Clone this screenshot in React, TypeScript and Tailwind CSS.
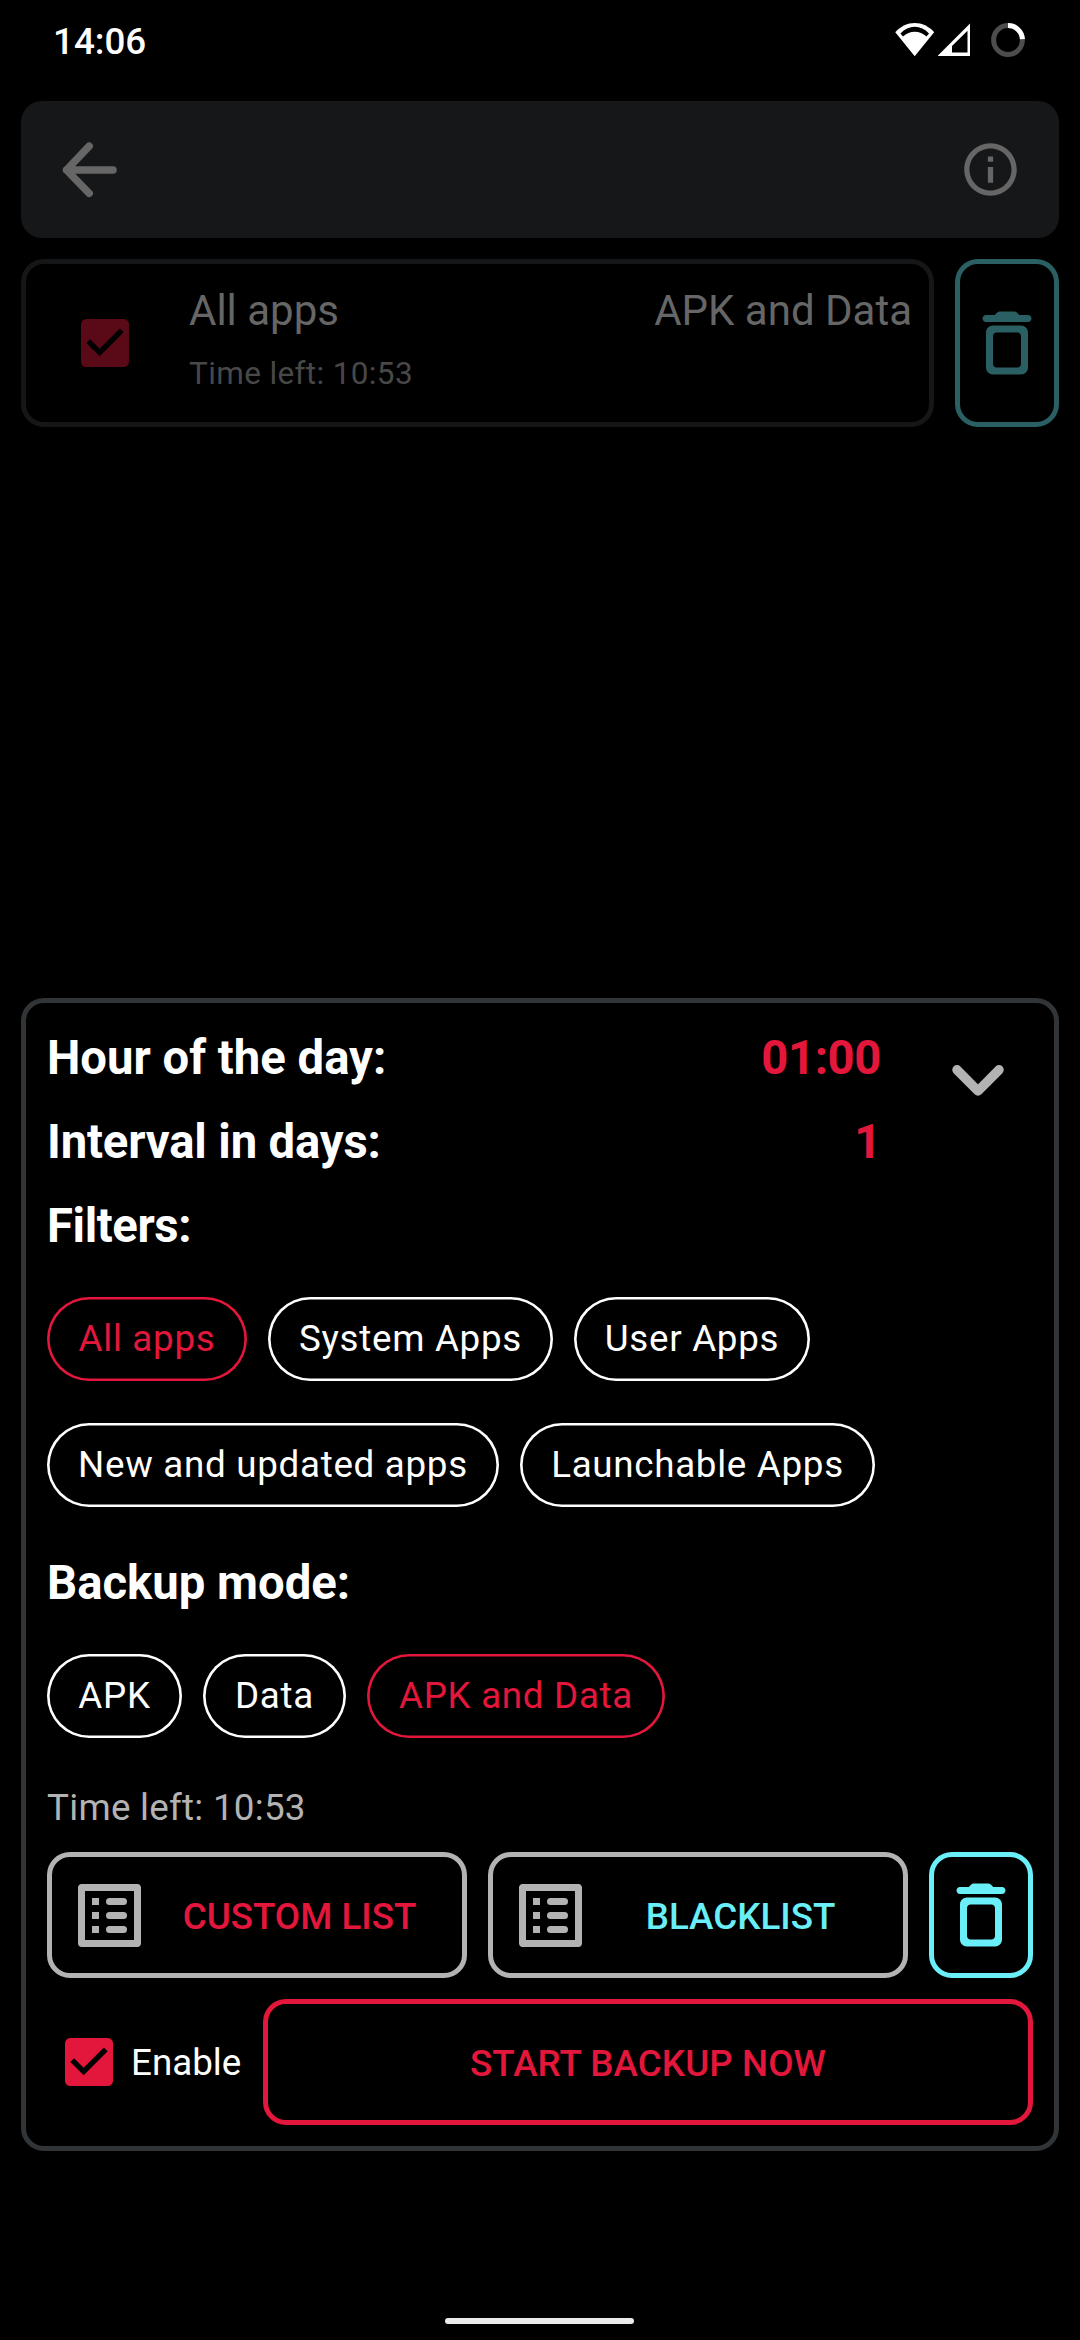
import React from "react";

const TrashIcon = () => (
  <svg viewBox="0 0 24 24" className="size-[84px] shrink-0" fill="currentColor">
    <path d="M6 4h2.5l.71-.71c.18-.18.44-.29.7-.29h4.18c.26 0 .52.11.7.29l.71.71H18c.55 0 1 .45 1 1s-.45 1-1 1H6c-.55 0-1-.45-1-1s.45-1 1-1z" />
    <path
      fillRule="evenodd"
      d="M6 9c0-1.100.9-2 2-2h8c1.100 0 2 .9 2 2v10c0 1.100-.9 2-2 2H8c-1.100 0-2-.9-2-2V9zm3 0c-.55 0-1 .45-1 1v8c0 .55.45 1 1 1h6c.55 0 1-.45 1-1v-8c0-.55-.45-1-1-1H9z"
    />
  </svg>
);

const ListIcon = () => (
  <svg viewBox="3 3 18 18" className="size-[63px] shrink-0" fill="#b3b3b3">
    <path
      fillRule="evenodd"
      d="M4 3h16c.55 0 1 .45 1 1v16c0 .55-.45 1-1 1H4c-.55 0-1-.45-1-1V4c0-.55.45-1 1-1zm1 2v14h14V5H5z"
    />
    <path d="M7 7h2v2H7zM7 11h2v2H7zM7 15h2v2H7z" />
    <rect x="11" y="7" width="6" height="2" rx="1" />
    <rect x="11" y="11" width="6" height="2" rx="1" />
    <rect x="11" y="15" width="6" height="2" rx="1" />
  </svg>
);

const CheckedBox = () => (
  <svg viewBox="3 3 18 18" className="size-[48px] shrink-0">
    <rect x="3" y="3" width="18" height="18" rx="2" fill="currentColor" />
    <path d="M10 17l-5-5 1.41-1.41L10 14.17l7.59-7.59L19 8z" fill="#000" />
  </svg>
);

const Chip = ({ label, width, active }: { label: string; width: string; active?: boolean }) => (
  <button
    className={
      "flex h-[84px] shrink-0 items-center justify-center rounded-full text-[36.75px] leading-none tracking-[0.7px] whitespace-nowrap shadow-[inset_0_0_0_2.6px_currentColor] " +
      width +
      (active ? " text-[#e2173b]" : " text-white")
    }
  >
    {label}
  </button>
);

const Heading = ({ label, value, tracking = "" }: { label: string; value?: string; tracking?: string }) => (
  <div className="flex h-[84px] items-center justify-between text-[47.25px] leading-none font-bold">
    <span className={tracking}>{label}</span>
    {value && <span className="tracking-[-0.4px] text-[#e2173b]">{value}</span>}
  </div>
);

const ListButton = ({ label, tone }: { label: string; tone: string }) => (
  <button className="flex h-[126px] w-[420px] items-center rounded-[23px] border-5 border-[#b3b3b3] pr-[4px] pl-[26px]">
    <ListIcon />
    <span className={"flex-1 pt-[4px] text-center text-[36.75px] leading-none font-medium " + tone}>{label}</span>
  </button>
);

export default function App() {
  return (
    <div className="flex h-[2340px] w-[1080px] flex-col overflow-hidden bg-black font-[Roboto,sans-serif] text-white">
      <header className="flex h-[101px] shrink-0 items-start justify-between pr-[55px] pl-[53px]">
        <span className="mt-[23px] text-[36.75px] leading-[37px] font-medium">14:06</span>
        <div className="mt-[22px] flex items-center">
          <svg viewBox="0 0 40 36" className="h-[36px] w-[40px]">
            <path d="M19.700 34.300.3 10.300C11-2.100 28.500-2.100 39.200 10.300z" fill="#fff" />
            <path d="M5.500 11.500C13.500 2.400 26 2.400 34 11.500L31.500 14.600C25 8 14.500 8 8 14.600z" fill="#000" />
          </svg>
          <svg viewBox="0 0 34 36" className="ml-[3px] h-[36px] w-[34px]">
            <path d="M-.5 34 32 1.500V34z" fill="#fff" />
            <path d="M14 24 29.500 8.700V30.500H14z" fill="#000" />
          </svg>
          <svg viewBox="0 0 34 34" className="ml-[19px] size-[34px]" fill="none" strokeWidth="5">
            <circle cx="17" cy="17" r="14.400" stroke="#4d4d4d" />
            <path d="M17 2.600A14.400 14.400 0 0 1 31.400 16.200" stroke="#fff" />
          </svg>
        </div>
      </header>

      <nav className="mx-[21px] flex h-[137px] shrink-0 items-center justify-between rounded-[21px] bg-[#161719] px-[37px] text-[#666666]">
        <svg
          viewBox="0 0 63 63"
          className="size-[63px]"
          fill="none"
          stroke="currentColor"
          strokeWidth="7.500"
          strokeLinecap="round"
          strokeLinejoin="round"
        >
          <path d="M55 32H8.500M31.200 8.200 8.500 32 31.200 55.300" />
        </svg>
        <svg viewBox="0 0 24 24" className="size-[63px]" fill="currentColor">
          <path d="M11 7h2v2h-2zm0 4h2v6h-2zm1-9C6.480 2 2 6.480 2 12s4.480 10 10 10 10-4.480 10-10S17.520 2 12 2zm0 18c-4.410 0-8-3.590-8-8s3.590-8 8-8 8 3.590 8 8-3.590 8-8 8z" />
        </svg>
      </nav>

      <section className="mx-[21px] mt-[21px] flex h-[168px] shrink-0 gap-[21px]">
        <div className="flex flex-1 rounded-[23px] border-5 border-[#151617] pr-[17px] pl-[55px]">
          <div className="flex items-center text-[#5a0917]">
            <CheckedBox />
          </div>
          <div className="ml-[60px] flex flex-1 flex-col">
            <div className="mt-[22px] flex h-[49px] items-center justify-between text-[42px] leading-none text-[#666666]">
              <span>All apps</span>
              <span>APK and Data</span>
            </div>
            <span className="mt-[20px] h-[37px] text-[31.5px] leading-[37px] tracking-[0.37px] text-[#484848]">
              Time left: 10:53
            </span>
          </div>
        </div>
        <button className="flex w-[104px] items-center justify-center rounded-[23px] border-5 border-[#2a5f63] text-[#2a5f63]">
          <TrashIcon />
        </button>
      </section>

      <main className="mx-[21px] mt-[571px] flex h-[1153px] shrink-0 flex-col rounded-[23px] border-5 border-[#313538] px-[21px] pt-[14px]">
        <div className="flex justify-between">
          <div className="w-[834px]">
            <Heading label="Hour of the day:" value="01:00" />
            <Heading label="Interval in days:" value="1" tracking="tracking-[-0.15px]" />
            <Heading label="Filters:" tracking="tracking-[-0.4px]" />
          </div>
          <svg
            viewBox="0 0 54 36"
            className="mt-[45px] mr-[28px] h-[36px] w-[54px]"
            fill="none"
            stroke="#b3b3b3"
            strokeWidth="9.500"
            strokeLinecap="round"
            strokeLinejoin="round"
          >
            <path d="M6 7.800 27 29 48 7.800" />
          </svg>
        </div>

        <div className="mt-[28px] flex gap-[21px]">
          <Chip label="All apps" width="w-[200px]" active />
          <Chip label="System Apps" width="w-[285px]" />
          <Chip label="User Apps" width="w-[236px]" />
        </div>
        <div className="mt-[42px] flex gap-[21px]">
          <Chip label="New and updated apps" width="w-[452px]" />
          <Chip label="Launchable Apps" width="w-[355px]" />
        </div>

        <div className="mt-[35px]">
          <Heading label="Backup mode:" />
        </div>
        <div className="mt-[28px] flex gap-[21px]">
          <Chip label="APK" width="w-[135px]" />
          <Chip label="Data" width="w-[143px]" />
          <Chip label="APK and Data" width="w-[298px]" active />
        </div>

        <p className="mt-[48px] h-[43px] text-[36.75px] leading-[43px] tracking-[0.27px] text-[#b3b3b3]">
          Time left: 10:53
        </p>

        <div className="mt-[23px] flex justify-between">
          <ListButton label="CUSTOM LIST" tone="text-[#e2173b]" />
          <ListButton label="BLACKLIST" tone="text-[#6aeef8]" />
          <button className="flex h-[126px] w-[104px] items-center justify-center rounded-[23px] border-5 border-[#6aeef8] text-[#6aeef8]">
            <TrashIcon />
          </button>
        </div>

        <div className="mt-[21px] flex h-[126px] items-center">
          <label className="flex w-[216px] items-center pl-[18px] text-[#e2173b]">
            <CheckedBox />
            <span className="ml-[18px] pt-[3px] text-[36.75px] leading-none text-white">Enable</span>
          </label>
          <button className="flex h-full flex-1 items-center justify-center rounded-[23px] border-5 border-[#e2173b] pt-[4px] text-[36.75px] leading-none font-medium tracking-[0.07px] text-[#e2173b]">
            START BACKUP NOW
          </button>
        </div>
      </main>

      <div className="mt-[167px] ml-[445px] h-[6px] w-[189px] shrink-0 rounded-full bg-[#ebebeb]" />
    </div>
  );
}
